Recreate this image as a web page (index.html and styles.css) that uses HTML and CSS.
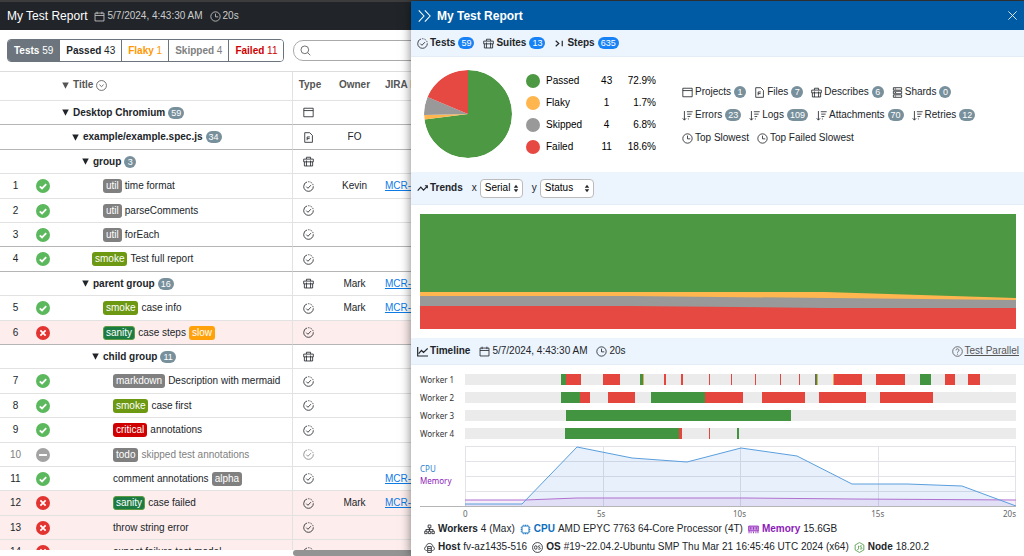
FILE: index.html
```html
<!DOCTYPE html>
<html lang="en">
<head>
<meta charset="utf-8">
<title>My Test Report</title>
<link rel="stylesheet" href="styles.css">
</head>
<body>
<svg class="sprite" aria-hidden="true">
  <symbol id="i-cal" viewBox="0 0 16 16"><path d="M1.500 3h13v11.500h-13zM1.500 6.500h13M4.500 1v3.500M11.500 1v3.500"/></symbol>
  <symbol id="i-clock" viewBox="0 0 16 16"><circle cx="8" cy="8" r="6.800"/><path d="M8 3.800V8.500h4"/></symbol>
  <symbol id="i-search" viewBox="0 0 16 16"><circle cx="7" cy="7" r="5.600"/><path d="M11.200 11.200 15 15"/></symbol>
  <symbol id="i-down" viewBox="0 0 16 16"><circle cx="8" cy="8" r="7.200"/><path d="m5 6.800 3 2.800 3-2.800"/></symbol>
  <symbol id="i-project" viewBox="0 0 16 16"><path d="M1.200 1.800h13.600v12.400H1.200zM1.200 5.200h13.600"/></symbol>
  <symbol id="i-file" viewBox="0 0 16 16"><path d="M2.500 1h7.300l3.900 4v10H2.500zM6 12V7.200h4M6 9.600h3.600"/></symbol>
  <symbol id="i-suite" viewBox="0 0 16 16"><path d="M1 4.500h14v4H1zM2 8.500v6h12v-6M5 4.500V1.800h6v2.700M5 6.500v8M11 6.500v8"/></symbol>
  <symbol id="i-case" viewBox="0 0 16 16"><circle cx="8" cy="8" r="7" stroke-dasharray="30 1.600 2 1.600 2 1.600 2 1.600"/><path d="m4.800 8.200 2.400 2.400 4.400-4.600"/></symbol>
  <symbol id="i-step" viewBox="0 0 16 16"><path d="m2.500 4 4.500 4-4.500 4M12 4v8" stroke-width="1.700"/></symbol>
  <symbol id="i-shard" viewBox="0 0 16 16"><path d="M2 1h12v3.600H2zM2 6.200h12v3.600H2zM2 11.400h12V15H2zM4 2.800h2M4 8h2M4 13.200h2"/></symbol>
  <symbol id="i-sort" viewBox="0 0 16 16"><path d="M3.500 1.500v13M1 12l2.500 2.800L6 12M7 2.500h8.500M7.500 6h6.500M8 9.500h4M8.500 13h1.500"/></symbol>
  <symbol id="i-trend" viewBox="0 0 16 16"><path d="m1 11 4.500-5 4 4.500 5.500-6M11.500 4H15v3.500" stroke-width="1.700"/></symbol>
  <symbol id="i-line" viewBox="0 0 16 16"><path d="M1 1.500V14.500h15M2.500 11l4-4.500 3 3L15.500 3.500" stroke-width="1.700"/></symbol>
  <symbol id="i-help" viewBox="0 0 16 16"><circle cx="8" cy="8" r="7"/><path d="M5.800 6.300c0-3 4.600-2.800 4.400 0C10.100 7.800 8 7.800 8 9.800M8 11.200v1.400"/></symbol>
  <symbol id="i-worker" viewBox="0 0 16 16"><path d="M6 1.500h4v4H6zM1 10.500h3.500V14H1zM6.300 10.500h3.500V14H6.300zM11.500 10.500H15V14h-3.500zM8 5.500v5M2.800 10.500V8h10.400v2.500"/></symbol>
  <symbol id="i-cpu" viewBox="0 0 16 16"><path d="M3 3h10v10H3zM5.500 1v2M8 1v2M10.500 1v2M5.500 13v2M8 13v2M10.500 13v2M1 5.500h2M1 8h2M1 10.500h2M13 5.500h2M13 8h2M13 10.500h2"/></symbol>
  <symbol id="i-mem" viewBox="0 0 16 16"><path d="M1 3h14v7H1z" fill="currentColor" fill-opacity=".45"/><path d="M4 4.500v3.500M8 4.500v3.500M12 4.500v3.500M1.500 10v3.500M4.500 11v2.500M8 11v2.500M11.500 11v2.500M14.500 10v3.500"/></symbol>
  <symbol id="i-host" viewBox="0 0 16 16"><path d="M4 12.500C.2 12.300-.2 7.500 3 7 3.300.500 12.700.500 13 7c3.200.500 2.800 5.300-1 5.500M5.300 6.500h5.400v8.700H5.300zM5.300 9.300h5.400M5.300 12.200h5.400"/></symbol>
  <symbol id="i-os" viewBox="0 0 16 16"><circle cx="8" cy="8" r="7.200"/><ellipse cx="5.500" cy="8" rx="1.800" ry="2.700"/><path d="M12 6c-1-1-3-.700-2.900.600.200 1.500 3 1.200 3 2.800 0 1.500-2.300 1.600-3.200.500"/></symbol>
  <symbol id="i-node" viewBox="0 0 16 16"><path d="m8 .800 6.300 3.600v7.200L8 15.200l-6.300-3.600V4.400zM6.500 5.500v4.300c0 1.400-1.300 1.500-2 .700M11.500 6c-1-.900-2.800-.600-2.700.600.200 1.300 2.800 1 2.800 2.500 0 1.400-2.200 1.500-3 .400"/></symbol>
  <symbol id="i-pass" viewBox="0 0 16 16"><circle cx="8" cy="8" r="8" fill="#5cb85c" stroke="none"/><path d="m4.300 8.300 2.600 2.500 4.800-5" stroke="#fff" stroke-width="2"/></symbol>
  <symbol id="i-fail" viewBox="0 0 16 16"><circle cx="8" cy="8" r="8" fill="#e33431" stroke="none"/><path d="m5 5 6 6M11 5l-6 6" stroke="#fff" stroke-width="2"/></symbol>
  <symbol id="i-skip" viewBox="0 0 16 16"><circle cx="8" cy="8" r="8" fill="#a3a3a3" stroke="none"/><path d="M3.500 8h9" stroke="#fff" stroke-width="2.200"/></symbol>
  <symbol id="i-tri" viewBox="0 0 8 8"><path d="M.3.500h7.400L4 7.800z" fill="currentColor" stroke="none"/></symbol>
  <symbol id="i-expand" viewBox="0 0 16 16"><path d="m2 1.500 6 6.500-6 6.500M9 1.500 15 8l-6 6.500"/></symbol>
  <symbol id="i-close" viewBox="0 0 16 16"><path d="m2 2 12 12M14 2 2 14"/></symbol>
  <symbol id="i-updown" viewBox="0 0 8 12"><path d="M4 1 7 5H1zM4 11 1 7h6z" fill="currentColor" stroke="none"/></symbol>
</svg>

<div class="app">
  <header class="topbar">
    <h1>My Test Report</h1>
    <span class="meta"><svg class="icon"><use href="#i-cal"/></svg>5/7/2024, 4:43:30 AM</span>
    <span class="meta"><svg class="icon"><use href="#i-clock"/></svg>20s</span>
  </header>

  <div class="toolbar">
    <div class="filters">
      <button class="on"><b>Tests</b> 59</button><button><b>Passed</b> 43</button><button class="flaky"><b>Flaky</b> 1</button><button class="skipped"><b>Skipped</b> 4</button><button class="failed"><b>Failed</b> 11</button>
    </div>
    <label class="search"><svg class="icon"><use href="#i-search"/></svg><input type="text" aria-label="Search"></label>
  </div>

  <div class="grid">
    <table>
      <colgroup><col class="c-num"><col class="c-status"><col class="c-title"><col class="c-type"><col class="c-owner"><col></colgroup>
      <thead><tr><th></th><th></th><th class="title l0"><div><svg class="tri"><use href="#i-tri"/></svg>Title <svg class="icon"><use href="#i-down"/></svg></div></th><th class="type">Type</th><th>Owner</th><th class="jira">JIRA Key</th></tr></thead>
      <tbody>
        <tr class="group sep"><td></td><td></td><td class="title l0"><div><svg class="tri"><use href="#i-tri"/></svg>Desktop Chromium <span class="badge">59</span></div></td><td><svg class="icon"><use href="#i-project"/></svg></td><td></td><td></td></tr>
        <tr class="group sep"><td></td><td></td><td class="title l1"><div><svg class="tri"><use href="#i-tri"/></svg>example/example.spec.js <span class="badge">34</span></div></td><td><svg class="icon"><use href="#i-file"/></svg></td><td>FO</td><td></td></tr>
        <tr class="group"><td></td><td></td><td class="title l2"><div><svg class="tri"><use href="#i-tri"/></svg>group <span class="badge">3</span></div></td><td><svg class="icon"><use href="#i-suite"/></svg></td><td></td><td></td></tr>
        <tr><td>1</td><td><svg class="state"><use href="#i-pass"/></svg></td><td class="title l4"><div><span class="tag">util</span>time format</div></td><td><svg class="icon"><use href="#i-case"/></svg></td><td>Kevin</td><td class="jira"><a href="#">MCR-1</a></td></tr>
        <tr><td>2</td><td><svg class="state"><use href="#i-pass"/></svg></td><td class="title l4"><div><span class="tag">util</span>parseComments</div></td><td><svg class="icon"><use href="#i-case"/></svg></td><td></td><td></td></tr>
        <tr class="sep"><td>3</td><td><svg class="state"><use href="#i-pass"/></svg></td><td class="title l4"><div><span class="tag">util</span>forEach</div></td><td><svg class="icon"><use href="#i-case"/></svg></td><td></td><td></td></tr>
        <tr class="sep"><td>4</td><td><svg class="state"><use href="#i-pass"/></svg></td><td class="title l3"><div><span class="tag smoke">smoke</span>Test full report</div></td><td><svg class="icon"><use href="#i-case"/></svg></td><td></td><td></td></tr>
        <tr class="group"><td></td><td></td><td class="title l2"><div><svg class="tri"><use href="#i-tri"/></svg>parent group <span class="badge">16</span></div></td><td><svg class="icon"><use href="#i-suite"/></svg></td><td>Mark</td><td class="jira"><a href="#">MCR-2</a></td></tr>
        <tr><td>5</td><td><svg class="state"><use href="#i-pass"/></svg></td><td class="title l4"><div><span class="tag smoke">smoke</span>case info</div></td><td><svg class="icon"><use href="#i-case"/></svg></td><td>Mark</td><td class="jira"><a href="#">MCR-3</a></td></tr>
        <tr class="bad sep"><td>6</td><td><svg class="state"><use href="#i-fail"/></svg></td><td class="title l4"><div><span class="tag sanity">sanity</span>case steps <span class="tag slow">slow</span></div></td><td><svg class="icon"><use href="#i-case"/></svg></td><td></td><td></td></tr>
        <tr class="group"><td></td><td></td><td class="title l3"><div><svg class="tri"><use href="#i-tri"/></svg>child group <span class="badge">11</span></div></td><td><svg class="icon"><use href="#i-suite"/></svg></td><td></td><td></td></tr>
        <tr><td>7</td><td><svg class="state"><use href="#i-pass"/></svg></td><td class="title l5"><div><span class="tag">markdown</span>Description with mermaid</div></td><td><svg class="icon"><use href="#i-case"/></svg></td><td></td><td></td></tr>
        <tr><td>8</td><td><svg class="state"><use href="#i-pass"/></svg></td><td class="title l5"><div><span class="tag smoke">smoke</span>case first</div></td><td><svg class="icon"><use href="#i-case"/></svg></td><td></td><td></td></tr>
        <tr><td>9</td><td><svg class="state"><use href="#i-pass"/></svg></td><td class="title l5"><div><span class="tag critical">critical</span>annotations</div></td><td><svg class="icon"><use href="#i-case"/></svg></td><td></td><td></td></tr>
        <tr class="muted"><td>10</td><td><svg class="state"><use href="#i-skip"/></svg></td><td class="title l5"><div><span class="tag">todo</span>skipped test annotations</div></td><td><svg class="icon"><use href="#i-case"/></svg></td><td></td><td></td></tr>
        <tr><td>11</td><td><svg class="state"><use href="#i-pass"/></svg></td><td class="title l5"><div>comment annotations <span class="tag">alpha</span></div></td><td><svg class="icon"><use href="#i-case"/></svg></td><td></td><td class="jira"><a href="#">MCR-4</a></td></tr>
        <tr class="bad"><td>12</td><td><svg class="state"><use href="#i-fail"/></svg></td><td class="title l5"><div><span class="tag sanity">sanity</span>case failed</div></td><td><svg class="icon"><use href="#i-case"/></svg></td><td>Mark</td><td class="jira"><a href="#">MCR-5</a></td></tr>
        <tr class="bad"><td>13</td><td><svg class="state"><use href="#i-fail"/></svg></td><td class="title l5"><div>throw string error</div></td><td><svg class="icon"><use href="#i-case"/></svg></td><td></td><td></td></tr>
        <tr class="bad"><td>14</td><td><svg class="state"><use href="#i-fail"/></svg></td><td class="title l5"><div>expect failure test model</div></td><td><svg class="icon"><use href="#i-case"/></svg></td><td></td><td></td></tr>
      </tbody>
    </table>
  </div>
  <div class="hscroll"><div class="thumb"></div></div>
</div>

<aside class="flyover">
  <header class="fly-head">
    <svg class="big"><use href="#i-expand"/></svg><h2>My Test Report</h2>
    <button aria-label="Close"><svg class="icon"><use href="#i-close"/></svg></button>
  </header>

  <div class="bar counts">
    <span class="item"><svg class="icon"><use href="#i-case"/></svg><b>Tests</b><span class="badge blue">59</span></span>
    <span class="item"><svg class="icon"><use href="#i-suite"/></svg><b>Suites</b><span class="badge blue">13</span></span>
    <span class="item"><svg class="icon"><use href="#i-step"/></svg><b>Steps</b><span class="badge blue">635</span></span>
  </div>

  <section class="summary">
    <svg class="pie" viewBox="0 0 88 88" role="img" aria-label="Results">
      <g transform="rotate(-90 44 44)" fill="none" stroke-width="44">
        <circle cx="44" cy="44" r="22" pathLength="59" stroke="#4c9843" stroke-dasharray="43 16"/>
        <circle cx="44" cy="44" r="22" pathLength="59" stroke="#ffb64f" stroke-dasharray="1 58" stroke-dashoffset="-43"/>
        <circle cx="44" cy="44" r="22" pathLength="59" stroke="#999" stroke-dasharray="4 55" stroke-dashoffset="-44"/>
        <circle cx="44" cy="44" r="22" pathLength="59" stroke="#e64942" stroke-dasharray="11 48" stroke-dashoffset="-48"/>
      </g>
    </svg>
    <table class="legend">
      <tr><td><i class="dot g"></i></td><td>Passed</td><td>43</td><td>72.9%</td></tr>
      <tr><td><i class="dot o"></i></td><td>Flaky</td><td>1</td><td>1.7%</td></tr>
      <tr><td><i class="dot s"></i></td><td>Skipped</td><td>4</td><td>6.8%</td></tr>
      <tr><td><i class="dot r"></i></td><td>Failed</td><td>11</td><td>18.6%</td></tr>
    </table>
    <div class="stats">
      <div class="line">
        <span class="item"><svg class="icon"><use href="#i-project"/></svg>Projects<span class="badge">1</span></span>
        <span class="item"><svg class="icon"><use href="#i-file"/></svg>Files<span class="badge">7</span></span>
        <span class="item"><svg class="icon"><use href="#i-suite"/></svg>Describes<span class="badge">6</span></span>
        <span class="item"><svg class="icon"><use href="#i-shard"/></svg>Shards<span class="badge">0</span></span>
      </div>
      <div class="line">
        <span class="item"><svg class="icon"><use href="#i-sort"/></svg>Errors<span class="badge">23</span></span>
        <span class="item"><svg class="icon"><use href="#i-sort"/></svg>Logs<span class="badge">109</span></span>
        <span class="item"><svg class="icon"><use href="#i-sort"/></svg>Attachments<span class="badge">70</span></span>
        <span class="item"><svg class="icon"><use href="#i-sort"/></svg>Retries<span class="badge">12</span></span>
      </div>
      <div class="line">
        <span class="item"><svg class="icon"><use href="#i-clock"/></svg>Top Slowest</span>
        <span class="item"><svg class="icon"><use href="#i-clock"/></svg>Top Failed Slowest</span>
      </div>
    </div>
  </section>

  <div class="bar trends">
    <span class="item"><svg class="icon"><use href="#i-trend"/></svg><b>Trends</b></span>
    <label class="pick">x <span class="select"><select class="w-x"><option>Serial</option></select><svg><use href="#i-updown"/></svg></span></label>
    <label class="pick">y <span class="select"><select class="w-y"><option>Status</option></select><svg><use href="#i-updown"/></svg></span></label>
  </div>

  <svg class="area" viewBox="0 0 596 115" preserveAspectRatio="none" role="img" aria-label="Trends">
    <rect width="596" height="115" fill="#e64942"/>
    <path d="M0 0H596V94H405L210 92H0z" fill="#999"/>
    <path d="M0 0H596V86L210 82H0z" fill="#ffb64f"/>
    <path d="M0 0H596V84L405 78H0z" fill="#4c9843"/>
  </svg>

  <div class="bar timeline">
    <span class="item"><svg class="icon"><use href="#i-line"/></svg><b>Timeline</b></span>
    <span class="item"><svg class="icon"><use href="#i-cal"/></svg>5/7/2024, 4:43:30 AM</span>
    <span class="item"><svg class="icon"><use href="#i-clock"/></svg>20s</span>
    <span class="item help"><svg class="icon"><use href="#i-help"/></svg><a href="#">Test Parallel</a></span>
  </div>

  <section class="gantt">
    <span>Worker 1</span>
    <svg class="track" viewBox="0 0 551 11" preserveAspectRatio="none">
      <path class="g" d="M96 0h5v11h-5zM175 0h3v11h-3zM351 0h1v11h-1zM455 0h11v11h-11z"/>
      <path class="o" d="M178 0h1v11h-1zM352 0h1v11h-1zM368 0h1v11h-1z"/>
      <path class="s" d="M350 0h1v11h-1z"/>
      <path class="r" d="M101 0h15v11h-15zM138 0h17v11h-17zM199 0h2v11h-2zM216 0h2v11h-2zM244 0h1v11h-1zM266 0h1v11h-1zM290 0h1v11h-1zM315 0h1v11h-1zM334 0h1v11h-1zM369 0h28v11h-28zM411 0h29v11h-29zM480 0h10v11h-10zM503 0h12v11h-12z"/>
    </svg>
    <span>Worker 2</span>
    <svg class="track" viewBox="0 0 551 11" preserveAspectRatio="none">
      <path class="g" d="M96 0h19v11h-19zM186 0h54v11h-54z"/>
      <path class="r" d="M115 0h10v11h-10zM143 0h27v11h-27zM240 0h38v11h-38zM297 0h43v11h-43zM354 0h47v11h-47zM415 0h53v11h-53z"/>
    </svg>
    <span>Worker 3</span>
    <svg class="track" viewBox="0 0 551 11" preserveAspectRatio="none"><path class="g" d="M101 0h225v11h-225z"/></svg>
    <span>Worker 4</span>
    <svg class="track" viewBox="0 0 551 11" preserveAspectRatio="none">
      <path class="g" d="M100 0h114v11h-114zM272 0h2v11h-2z"/>
      <path class="r" d="M214 0h3v11h-3zM244 0h1v11h-1z"/>
    </svg>
  </section>

  <section class="usage">
    <div class="keys"><span class="cpu">CPU</span><span class="mem">Memory</span></div>
    <svg class="load" viewBox="0 0 551 60" preserveAspectRatio="none" role="img" aria-label="CPU and memory">
      <path class="rule" d="M0 .5H551M0 15.500H551M0 30.500H551M0 45.500H551M.5 0V60M138.500 0V60M275.500 0V60M413.500 0V60M550.500 0V60"/>
      <path d="M0 58H57L112 1 167 12 222 16 276 2 332 10 387 38H442L497 40 551 60H0z" fill="#4285dc" fill-opacity=".12"/>
      <path d="M0 54H60L112 52H280L387 53 551 54V60H0z" fill="#8c1ab9" fill-opacity=".08"/>
      <path d="M0 54H60L112 52H280L387 53 551 54" class="mem-line"/>
      <path d="M0 58H57L112 1 167 12 222 16 276 2 332 10 387 38H442L497 40 551 60" class="cpu-line"/>
    </svg>
  </section>
  <div class="axis"><span>0</span><span>5s</span><span>10s</span><span>15s</span><span>20s</span></div>

  <footer class="info">
    <div class="line">
      <span class="item"><svg class="icon"><use href="#i-worker"/></svg><b>Workers</b> 4 (Max)</span>
      <span class="item"><svg class="icon blue-ink"><use href="#i-cpu"/></svg><b class="blue-ink">CPU</b> AMD EPYC 7763 64-Core Processor (4T)</span>
      <span class="item"><svg class="icon purple-ink"><use href="#i-mem"/></svg><b class="purple-ink">Memory</b> 15.6GB</span>
    </div>
    <div class="line">
      <span class="item"><svg class="icon"><use href="#i-host"/></svg><b>Host</b> fv-az1435-516</span>
      <span class="item"><svg class="icon"><use href="#i-os"/></svg><b>OS</b> #19~22.04.2-Ubuntu SMP Thu Mar 21 16:45:46 UTC 2024 (x64)</span>
      <span class="item"><svg class="icon green-ink"><use href="#i-node"/></svg><b>Node</b> 18.20.2</span>
    </div>
  </footer>
</aside>
</body>
</html>
```

FILE: styles.css
```css
* { box-sizing: border-box; }
html, body { height: 100%; margin: 0; overflow: hidden; }
body {
  position: relative;
  background: #fff;
  color: #212529;
  font: 10px/12px "Liberation Sans", Arial, sans-serif;
}
h1, h2 { margin: 0; font-size: 12px; line-height: 14px; white-space: nowrap; }
button, input, select { font: inherit; color: inherit; }
.sprite { display: none; }
.icon, .big {
  flex: none;
  width: 11px;
  height: 11px;
  fill: none;
  stroke: currentColor;
  stroke-width: 1.2;
  vertical-align: middle;
}
.big { width: 14px; height: 14px; }

/* main window */
.app { display: flex; flex-direction: column; height: 100%; }
.topbar {
  display: flex;
  align-items: center;
  gap: 7px;
  height: 30px;
  padding: 0 7px;
  border-top: 2px solid #3c3c3c;
  background: #212529;
  color: #fff;
}
.topbar h1 { font-weight: normal; }
.meta { display: flex; align-items: center; gap: 2px; color: #ccc; }
.toolbar { display: flex; align-items: center; gap: 9px; height: 41px; padding: 0 7px; }
.filters { display: flex; flex: none; border: 1px solid #6c757d; border-radius: 4px; overflow: hidden; }
.filters button {
  height: 21px;
  padding: 0 6px;
  border: 0;
  border-left: 1px solid #6c757d;
  background: #fff;
  white-space: nowrap;
}
.filters .on { border-left: 0; background: #6c757d; color: #fff; }
.filters .flaky { color: #ff9800; }
.filters .skipped { color: #808080; }
.filters .failed { color: #d00000; }
.search {
  display: flex;
  flex: 1;
  align-items: center;
  height: 21px;
  padding: 0 6px;
  border: 1px solid #aaa;
  border-radius: 10px;
  color: #555;
}
.search input { flex: 1; min-width: 0; border: 0; outline: 0; background: none; }

.grid { flex: 1; min-height: 0; overflow: hidden; border-top: 1px solid #ddd; }
.grid table { width: 100%; table-layout: fixed; border-collapse: separate; border-spacing: 0; }
.c-num { width: 31px; }
.c-status { width: 24px; }
.c-title { width: 238px; }
.c-type { width: 31px; }
.c-owner { width: 61px; }
.grid th { height: 29px; padding: 0 0 2px; border-bottom: 1px solid #e2e2e2; color: #555; }
.grid th.type { padding-left: 3px; }
.grid td { height: 24px; padding: 0; border-bottom: 1px solid #e2e2e2; text-align: center; }
.grid tr:nth-child(5n+2) td, .grid tr:nth-child(5n+4) td { height: 25px; }
.grid .sep td { border-bottom-color: #b5b5b5; }
.grid .bad td { background: #fdeeed; }
.grid .muted { color: #808080; }
.grid .group .title { font-weight: bold; }
.grid .title { border-right: 1px solid #e2e2e2; text-align: left; }
.grid .jira { text-align: left; }
.title div { display: flex; align-items: center; gap: 3px; height: 14px; white-space: nowrap; }
.grid .l0 { padding-left: 7px; }
.grid .l1 { padding-left: 17px; }
.grid .l2 { padding-left: 27px; }
.grid .l3 { padding-left: 37px; }
.grid .l4 { padding-left: 48px; }
.grid .l5 { padding-left: 58px; }
.tri { flex: none; width: 7px; height: 7px; margin-right: 1px; }
.state { display: block; width: 14px; height: 14px; margin: 0 auto; fill: none; }
a { color: #0d7be5; }
.tag { height: 14px; padding: 0 3px; border-radius: 3px; background: #808080; color: #fff; line-height: 14px; }
.smoke { background: #6c9812; }
.sanity { padding: 0 2px; border: 1px solid #5f9b42; background: #1b7b43; line-height: 12px; }
.slow { background: #ffa10a; }
.critical { background: #d00000; }
.badge {
  min-width: 12px;
  height: 12px;
  padding: 0 3px;
  border-radius: 6px;
  background: #78909c;
  color: #fff;
  font-size: 9px;
  font-weight: normal;
  line-height: 12px;
  text-align: center;
}
.badge.blue { background: #1782f5; }
.hscroll { height: 6px; padding-left: 293px; background: #fff; }
.thumb { height: 6px; border-radius: 3px; background: #939393; }

/* report panel */
.flyover {
  position: absolute;
  top: 1px;
  right: 0;
  bottom: 0;
  left: 411px;
  overflow: hidden;
  background: #fff;
  box-shadow: 0 0 10px rgba(0, 0, 0, .5);
}
.fly-head {
  display: flex;
  align-items: center;
  gap: 6px;
  height: 29px;
  padding: 0 6px;
  background: #005ba4;
  color: #fff;
}
.fly-head button { display: flex; margin-left: auto; padding: 0; border: 0; background: none; }
.item { display: flex; align-items: center; gap: 2px; white-space: nowrap; }
.info .item { gap: 3px; }
.bar {
  display: flex;
  align-items: center;
  gap: 9px;
  height: 27px;
  padding: 0 5px 0 6px;
  border-bottom: 1px solid #e4edf5;
  background: #ecf4fe;
}
.badge.blue { margin-left: 1px; }
.summary { display: flex; gap: 14px; height: 115px; padding: 13px 0 0 13px; }
.pie { flex: none; width: 88px; height: 88px; border-radius: 50%; }
.legend { align-self: flex-start; width: 130px; border-spacing: 0; color: #000; }
.legend td { height: 22px; padding: 0; }
.legend td:nth-child(1) { width: 20px; }
.legend td:nth-child(3) { text-align: center; }
.legend td:nth-child(4) { text-align: right; }
.dot { display: block; width: 14px; height: 14px; border-radius: 50%; }
.dot.g { background: #4c9843; }
.dot.o { background: #ffb64f; }
.dot.s { background: #999; }
.dot.r { background: #e64942; }
.stats { display: flex; flex-direction: column; gap: 11px; padding: 16px 0 0 12px; }
.stats .badge { margin-left: 1px; }
.line { display: flex; gap: 8px; }
.trends { height: 33px; }
.pick { display: flex; align-items: center; gap: 3px; }
.select { position: relative; display: flex; }
.select select {
  appearance: none;
  height: 19px;
  padding: 0 4px;
  border: 1px solid #bbb;
  border-radius: 4px;
  background: #fff;
  color: #000;
}
.w-x { width: 43px; }
.w-y { width: 54px; }
.select svg { position: absolute; top: 5px; right: 4px; width: 6px; height: 9px; }
.area { display: block; width: calc(100% - 17px); height: 115px; margin: 9px 8px 9px 9px; }
.timeline .help { margin-left: auto; color: #555; }
.help a { color: inherit; }
.gantt {
  display: grid;
  grid-template-columns: 45px 1fr;
  row-gap: 7px;
  padding: 9px 8px 7px 9px;
  color: #333;
  font: 8px/11px "Noto Sans", sans-serif;
}
.track { width: 100%; height: 11px; background: #ebebeb; }
.track .g { fill: #439440; }
.track .r { fill: #e4453c; }
.track .o { fill: #e8a860; }
.track .s { fill: #666; }
.usage {
  display: grid;
  grid-template-columns: 45px 1fr;
  margin: 0 8px 0 9px;
  border-bottom: 1px solid #b5b5b5;
  font: 8px/12px "Noto Sans", sans-serif;
}
.keys { display: flex; flex-direction: column; padding-top: 17px; }
.keys .cpu { color: #2b7fd0; }
.keys .mem { color: #8c1ab9; }
.load { display: block; width: 100%; height: 60px; fill: none; }
.rule { stroke: #e2e2e8; }
.cpu-line { stroke: #5a9fdd; }
.mem-line { stroke: #b070d0; }
.axis {
  display: grid;
  grid-template-columns: 1fr 2fr 2fr 2fr 1fr;
  margin: 1px 8px 0 52px;
  color: #666;
  font: 8px/12px "Noto Sans", sans-serif;
  text-align: center;
}
.axis span:first-child { text-align: left; }
.axis span:last-child { text-align: right; }
.info { display: flex; flex-direction: column; gap: 6px; padding: 3px 0 0 13px; }
.info .line { gap: 5px; }
.blue-ink { color: #0d6ebd; }
.purple-ink { color: #8c1ab9; }
.green-ink { color: #4c9843; }
```
